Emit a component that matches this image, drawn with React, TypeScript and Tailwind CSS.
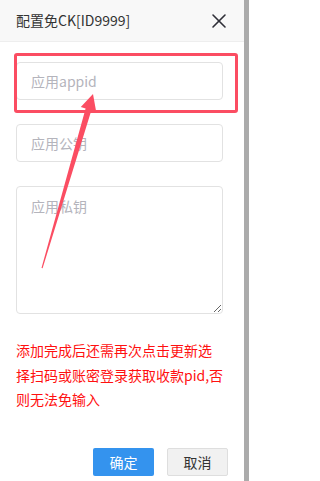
import { X } from "lucide-react";

export default function App() {
  return (
    <div
      className="flex h-[481px] w-[249px] overflow-hidden bg-white"
      style={{ fontFamily: '"Noto Sans CJK SC", "Noto Sans", sans-serif' }}
    >
      <div className="relative flex h-full w-[244px] flex-col bg-white">
        {/* header */}
        <div className="flex h-[42px] items-center justify-between border-b border-[#eeeeee] bg-[#f8f8f8] pl-4 pr-[13px]">
          <span className="text-[14px] text-[#333]">配置免CK[ID9999]</span>
          <X className="h-[24px] w-[24px] text-[#2f2f38]" strokeWidth={1.6} />
        </div>

        {/* form */}
        <div className="flex flex-col gap-6 px-4 pt-5">
          <input
            className="h-[38px] w-[207px] rounded-[4px] border border-[#e2e2e2] pl-[14px] text-[14px] outline-none placeholder:text-[#b4b4bc]"
            placeholder="应用appid"
          />
          <input
            className="h-[38px] w-[207px] rounded-[4px] border border-[#e2e2e2] pl-[14px] text-[14px] outline-none placeholder:text-[#b4b4bc]"
            placeholder="应用公钥"
          />
          <textarea
            className="h-[128px] w-[207px] rounded-[4px] border border-[#e2e2e2] pl-[14px] pt-[9px] text-[14px] leading-[20px] outline-none placeholder:text-[#b4b4bc]"
            placeholder="应用私钥"
          />
          <p className="w-[209px] text-[14px] leading-[24.5px] text-[#ff1010]">
            添加完成后还需再次点击更新选择扫码或账密登录获取收款pid,否则无法免输入
          </p>
        </div>

        {/* buttons */}
        <div className="mt-auto mb-[5px] flex justify-end gap-[13px] pr-4">
          <button className="h-[28px] w-[61px] rounded-[2px] bg-[#3493ee] text-[14px] text-white">
            确定
          </button>
          <button className="h-[28px] w-[61px] rounded-[2px] border border-[#dedede] bg-[#f1f1f1] text-[14px] text-[#333]">
            取消
          </button>
        </div>

        {/* annotation overlay */}
        <div className="pointer-events-none absolute left-[14px] top-[53px] h-[60px] w-[224px] rounded-[3px] border-[3px] border-[#fb4d62]" />
        <svg
          className="pointer-events-none absolute left-0 top-0"
          width="244"
          height="481"
          viewBox="0 0 244 481"
        >
          <polygon
            fill="#fb4d62"
            points="41.5,268 85.6,108.6 80.8,107.1 93,94 96.2,111.7 91.4,110.2 42.6,268.3"
          />
        </svg>
      </div>
      <div className="h-full flex-1 bg-[#ababab]" />
    </div>
  );
}
